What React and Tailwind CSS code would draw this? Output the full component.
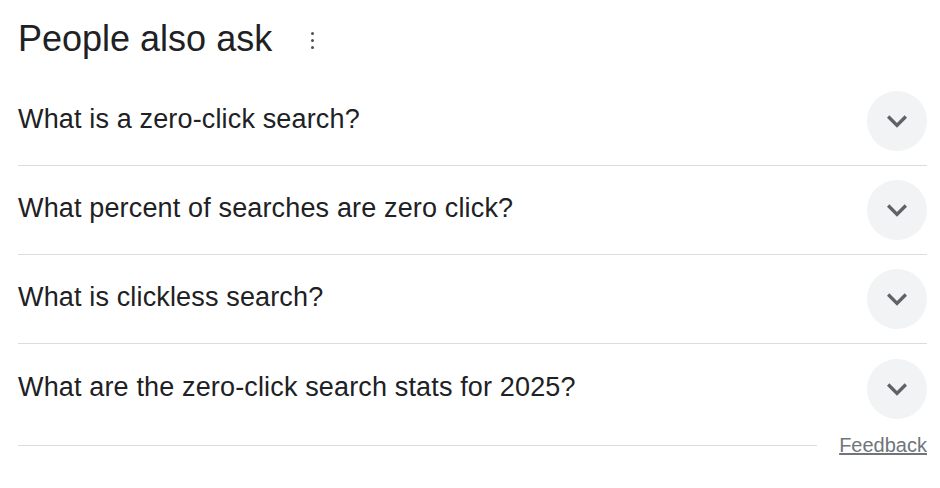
import React from "react";

const questions = [
  "What is a zero-click search?",
  "What percent of searches are zero click?",
  "What is clickless search?",
  "What are the zero-click search stats for 2025?",
];

function Chevron() {
  return (
    <div className="w-[60px] h-[60px] rounded-full bg-[#f1f3f4] flex items-center justify-center shrink-0">
      <svg width="40" height="40" viewBox="0 0 24 24" fill="#5f6368">
        <path d="M16.59 8.59L12 13.17 7.41 8.59 6 10l6 6 6-6z" />
      </svg>
    </div>
  );
}

export default function App() {
  return (
    <div
      className="w-[940px] h-[488px] bg-white pl-[18px] pr-[13px] text-[#202124]"
      style={{ fontFamily: "Arial, 'Liberation Sans', sans-serif" }}
    >
      <div className="h-[77px] pt-[21px] flex items-start">
        <div className="flex items-center">
          <span className="text-[36px] leading-[36px]">People also ask</span>
          <div className="ml-[39px] flex flex-col gap-[4px] mt-[2px]">
            <span className="w-[3px] h-[3px] rounded-full bg-[#4d5156]" />
            <span className="w-[3px] h-[3px] rounded-full bg-[#4d5156]" />
            <span className="w-[3px] h-[3px] rounded-full bg-[#4d5156]" />
          </div>
        </div>
      </div>
      {questions.map((q, i) => (
        <div
          key={i}
          className={`flex items-center justify-between ${
            i < questions.length - 1
              ? "h-[89px] border-b border-[#dadce0]"
              : "h-[89px]"
          }`}
        >
          <span className="text-[27px] leading-[36px] pb-[4px] tracking-[0.15px]">{q}</span>
          <Chevron />
        </div>
      ))}
      <div className="flex items-center h-[26px] mt-[-1px]">
        <div className="flex-1 h-px bg-[#dadce0]" />
        <span className="ml-[22px] text-[20px] leading-[26px] text-[#70757a] underline">
          Feedback
        </span>
      </div>
    </div>
  );
}
